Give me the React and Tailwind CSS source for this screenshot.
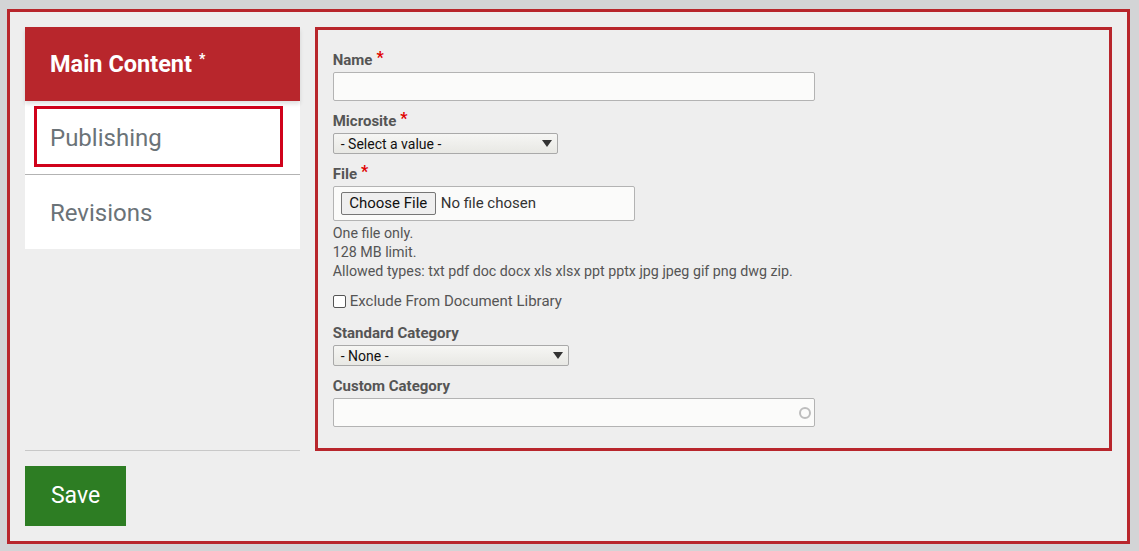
import React from "react";

const font = { fontFamily: "Roboto, 'Liberation Sans', sans-serif" };

function Label({ children, required }) {
  return (
    <div className="text-[15px] leading-[20px] font-bold text-[#555555] pt-[1px]">
      {children}
      {required && <span className="text-[#e00000] ml-[4px] relative top-[-2px] text-[16px]">*</span>}
    </div>
  );
}

function FakeSelect({ width, text }) {
  return (
    <div
      className={`${width} h-[21px] mt-[2px] flex items-center justify-between pl-[7px] pr-[5px] border border-[#a9a9a9] rounded-[2px] bg-gradient-to-b from-[#f6f6f4] to-[#e8e8e4] text-[14px] text-[#111]`}
    >
      <span className="leading-none">{text}</span>
      <svg width="10" height="7" viewBox="0 0 10 7"><path d="M0 0 L10 0 L5 7 Z" fill="#333" /></svg>
    </div>
  );
}

export default function App() {
  return (
    <div className="w-[1139px] h-[551px] bg-[#d3d4d6] pt-[9px] pl-[7px]" style={font}>
      <div className="w-[1123px] h-[535px] border-[3px] border-[#b8262c] bg-[#eeeeee] px-[15px] pt-[15px]">
        <div className="flex gap-[15px]">
          <div className="w-[275px] flex flex-col border-b border-[#c8c8c8]">
            <div className="h-[74px] bg-[#b8262c] flex items-center pl-[25px] pt-[1px] text-white font-bold text-[23.5px] shadow-[0_3px_4px_rgba(0,0,0,0.12)] relative z-10">
              Main Content<span className="text-[14px] ml-[7px] relative top-[-5px]">*</span>
            </div>
            <div className="h-[74px] bg-white border-b border-[#b3b3b3] pt-[5px] pl-[9px] pr-[17px]">
              <div className="h-[61px] border-[3px] border-[#d0021b] flex items-center pl-[13px] pt-[2px] text-[24px] text-[#6b7378]">
                Publishing
              </div>
            </div>
            <div className="h-[74px] bg-white flex items-center pl-[25px] pt-[2px] text-[24px] text-[#6b7378]">
              Revisions
            </div>
          </div>
          <div className="w-[798px] border-[3px] border-[#b8262c] pl-[15px] pt-[19px] pb-[21px]">
            <Label required>Name</Label>
            <div className="w-[482px] h-[29px] mt-[2px] border border-[#b3b3b3] rounded-[2px] bg-[#fbfbfa]" />

            <div className="mt-[9px]"><Label required>Microsite</Label></div>
            <FakeSelect width="w-[225px]" text="- Select a value -" />

            <div className="mt-[9px]"><Label required>File</Label></div>
            <div className="w-[302px] h-[35px] mt-[2px] border border-[#b3b3b3] rounded-[2px] bg-[#fbfbfa] flex items-center pl-[7px]">
              <div className="h-[23px] w-[95px] border border-[#767676] rounded-[2px] bg-[#efefef] flex items-center justify-center text-[15px] text-[#111]">
                Choose File
              </div>
              <span className="ml-[5px] text-[15px] text-[#333]">No file chosen</span>
            </div>
            <div className="mt-[3px] text-[14.25px] leading-[19px] text-[#555555]">
              <div>One file only.</div>
              <div>128 MB limit.</div>
              <div>Allowed types: txt pdf doc docx xls xlsx ppt pptx jpg jpeg gif png dwg zip.</div>
            </div>
            <div className="mt-[10px] flex items-center h-[20px]">
              <div className="w-[13px] h-[13px] border border-[#555] rounded-[2px] bg-white" />
              <span className="ml-[4px] text-[15px] text-[#555555]">Exclude From Document Library</span>
            </div>

            <div className="mt-[11px]"><Label>Standard Category</Label></div>
            <FakeSelect width="w-[236px]" text="- None -" />

            <div className="mt-[9px]"><Label>Custom Category</Label></div>
            <div className="w-[482px] h-[29px] mt-[2px] border border-[#b3b3b3] rounded-[2px] bg-[#fbfbfa] flex items-center justify-end pr-[3px]">
              <div className="w-[12px] h-[12px] rounded-full border-[2px] border-[#bdbdbd]" />
            </div>
          </div>
        </div>
        <div className="mt-[15px] w-[101px] h-[60px] bg-[#2d7d23] flex items-center justify-center text-white text-[23px]">
          Save
        </div>
      </div>
    </div>
  );
}
